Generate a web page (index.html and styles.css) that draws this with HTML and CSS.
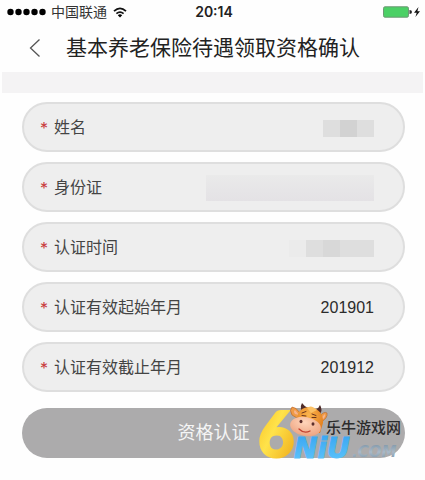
FILE: index.html
```html
<!DOCTYPE html>
<html lang="zh-CN">
<head>
<meta charset="utf-8">
<meta name="viewport" content="width=device-width, initial-scale=1">
<title>基本养老保险待遇领取资格确认</title>
<link rel="stylesheet" href="styles.css">
</head>
<body>
<div class="status">
  <div class="carrier">
    <svg class="signal" width="39" height="8" viewBox="0 0 39 8" aria-hidden="true"><circle cx="3.5" cy="4" r="3.2"/><circle cx="11.5" cy="4" r="3.2"/><circle cx="19.5" cy="4" r="3.2"/><circle cx="27.5" cy="4" r="3.2"/><circle cx="35.5" cy="4" r="3.2"/></svg>
    <span>中国联通</span>
    <svg class="wifi" width="14" height="11" viewBox="0 0 14 11" aria-hidden="true"><path d="M1 4.2Q7-1.6 13 4.2M3.4 6.7Q7 3.4 10.6 6.7" fill="none" stroke="#111" stroke-width="1.7"/><path d="M4.8 8.2Q7 6.4 9.2 8.2L7 10.5z"/></svg>
  </div>
  <time class="clock">20:14</time>
  <div class="power">
    <svg width="38" height="12" viewBox="0 0 38 12" aria-hidden="true"><rect x=".5" y=".8" width="25" height="10.4" rx="1.5" fill="#4bd065" stroke="#6d9874"/><path d="M26.5 4Q29 4 29 6T26.500 8z" fill="#222"/><path d="M35.500 1L31 6.700H33.700L32.400 11L37 5.200H34.400z" fill="#111"/></svg>
  </div>
</div>
<header class="nav">
  <button class="back" type="button" aria-label="返回"><svg width="12" height="20" viewBox="0 0 12 20"><path d="M10.500 1.500L1.500 10L10.500 18.500" fill="none" stroke="#555" stroke-width="1.300"/></svg></button>
  <h1>基本养老保险待遇领取资格确认</h1>
</header>
<div class="band"></div>
<form class="form">
  <div class="field"><span class="star">*</span><span class="label">姓名</span><span class="mask name"><i></i><i></i><i></i></span></div>
  <div class="field"><span class="star">*</span><span class="label">身份证</span><span class="mask idcard"></span></div>
  <div class="field"><span class="star">*</span><span class="label">认证时间</span><span class="mask date"><i></i><i></i><i></i><i></i></span></div>
  <div class="field"><span class="star">*</span><label class="label" for="start">认证有效起始年月</label><input id="start" type="text" value="201901" readonly></div>
  <div class="field"><span class="star">*</span><label class="label" for="end">认证有效截止年月</label><input id="end" type="text" value="201912" readonly></div>
  <div class="action">
    <button class="submit" type="button">资格认证</button>
    <svg class="watermark" width="150" height="84" viewBox="-4 -12 150 84" role="img" aria-label="乐牛游戏网">
      <defs>
        <linearGradient id="gold" x1="0" y1="0" x2="1" y2="1"><stop offset="0" stop-color="#f6b91c"/><stop offset=".45" stop-color="#ffe34a"/><stop offset="1" stop-color="#eda414"/></linearGradient>
        <linearGradient id="blue" x1="0" y1="0" x2="0" y2="1"><stop offset="0" stop-color="#35a3f2"/><stop offset="1" stop-color="#62c7fb"/></linearGradient>
        <linearGradient id="steel" x1="0" y1="0" x2="0" y2="1"><stop offset="0" stop-color="#7c93a6"/><stop offset=".5" stop-color="#a9bac8"/><stop offset="1" stop-color="#7890a4"/></linearGradient>
        <radialGradient id="fur" cx=".45" cy=".3" r=".8"><stop offset="0" stop-color="#fbb54d"/><stop offset="1" stop-color="#dd7416"/></radialGradient>
        <radialGradient id="snout" cx=".45" cy=".3" r=".8"><stop offset="0" stop-color="#ffd5ba"/><stop offset="1" stop-color="#eb9d79"/></radialGradient>
      </defs>
      <text class="six" x="-1" y="53" fill="url(#gold)" stroke="url(#gold)">6</text>
      <text class="niu" x="35" y="54" fill="url(#blue)" stroke="url(#blue)">NiU</text>
      <text class="com" x="93" y="53" fill="url(#steel)">.COM</text>
      <g>
        <path d="M41 9Q37 3 33 3Q30 6 33 11Q37 15 42 13zM61 12Q65 7 68 9Q69 14 62 18z" fill="#ef9b46" stroke="#b96225" stroke-width=".6"/>
        <path d="M36 6Q34 7 36 10L40 11zM66 10L63 13L63 16Q67 13 66 10z" fill="#f7b38d"/>
        <path d="M42 6Q41 2 43-1Q45 2 49 4L47 7zM57 5Q60 4 61 1Q64 6 61 10z" fill="#4e2b28"/>
        <path d="M38 17Q38 3 51 3Q65 6 64 19L61 29H38z" fill="url(#fur)"/>
        <path d="M48 4Q52 0 58 6L52 9z" fill="#fbc064"/>
        <ellipse cx="46.500" cy="22.500" rx="15.500" ry="9.500" transform="rotate(10 46.500 22.500)" fill="url(#snout)"/>
        <path d="M43 9l4-1.500M43 11.500l4 .5M53 10l4 1.500M53 13.500l4 0" stroke="#6b341c" stroke-width="1" stroke-linecap="round"/>
        <ellipse cx="42" cy="17.500" rx="1.500" ry="1.800" fill="#5c2e2b"/><ellipse cx="54" cy="20" rx="1.500" ry="1.800" fill="#5c2e2b"/>
        <path d="M40 25Q45 30 51 27" fill="none" stroke="#c4422f" stroke-width="1.300" stroke-linecap="round"/>
      </g>
      <text class="site" x="67" y="29">乐牛游戏网</text>
    </svg>
  </div>
</form>
</body>
</html>
```
FILE: styles.css
```css
* { box-sizing: border-box; }

body {
  margin: 0;
  background: #fefefe;
  color: #222;
  font-family: "Liberation Sans", "Noto Sans CJK SC", sans-serif;
}

.status {
  display: grid;
  grid-template-columns: 1fr auto 1fr;
  align-items: center;
  height: 24px;
  padding: 0 4px 0 7px;
}

.carrier {
  display: flex;
  align-items: center;
  gap: 5px;
  font-size: 14px;
  line-height: 20px;
  color: #333;
}

.wifi { margin-left: 1px; }

.clock {
  font-family: Inter, sans-serif;
  font-size: 14px;
  font-weight: 600;
  line-height: 20px;
}

.power {
  display: flex;
  justify-content: flex-end;
}

.nav {
  display: grid;
  grid-template-columns: 66px 1fr 68px;
  align-items: center;
  height: 48px;
}

.back {
  display: flex;
  justify-content: flex-end;
  width: 41px;
  padding: 0;
  border: 0;
  background: none;
}

h1 {
  margin: 0;
  font-size: 21px;
  font-weight: 400;
  line-height: 32px;
  text-align: center;
  white-space: nowrap;
}

.band {
  height: 21px;
  margin: 0 2px;
  background: #f4f3f4;
}

.form {
  display: flex;
  flex-direction: column;
  gap: 10px;
  padding: 9px 20px 20px 22px;
}

.field {
  display: flex;
  align-items: center;
  height: 50px;
  padding: 2px 29px 0 16px;
  border: 2px solid #dedede;
  border-radius: 25px;
  background: #eee;
  font-size: 16px;
  line-height: 24px;
}

.star {
  width: 14px;
  color: #c83c3c;
  font-family: Inter, sans-serif;
}

.label {
  flex: none;
  color: #444;
}

input {
  flex: 1;
  min-width: 0;
  padding: 0;
  border: 0;
  background: none;
  color: #2b2b2b;
  font: inherit;
  text-align: right;
  outline: 0;
}

.mask {
  display: flex;
  height: 17px;
  margin-left: auto;
}

.mask i {
  width: 17px;
  background: #dedede;
}

.name i:nth-child(2) { background: #d2d2d2; }

.idcard {
  width: 168px;
  height: 26px;
  background: linear-gradient(#eaeaea, #e6e5e7 60%, #e4e2e5);
}

.date i:first-child { background: #ebebeb; }
.date i:nth-child(3) { background: #d8d8d8; }
.date i:last-child { width: 34px; }

.action {
  position: relative;
  margin-top: 6px;
}

.submit {
  display: block;
  width: 100%;
  height: 50px;
  padding: 0;
  border: 0;
  border-radius: 25px;
  background: #acabac;
  color: #f5f5f5;
  font: inherit;
  font-size: 18px;
  line-height: 26px;
}

.watermark {
  position: absolute;
  right: 0;
  bottom: -18px;
}

.six {
  font-family: Lato, sans-serif;
  font-size: 63px;
  font-weight: 900;
  stroke-width: 2px;
}

.niu {
  font-family: "DejaVu Sans", sans-serif;
  font-size: 28px;
  font-weight: 700;
  font-style: italic;
  stroke-width: 1px;
}

.com {
  font-family: "DejaVu Sans", sans-serif;
  font-size: 15px;
  font-weight: 700;
  font-style: italic;
}

.site {
  fill: #2c2c2c;
  font-size: 15px;
  font-weight: 500;
  font-family: "Noto Sans CJK SC", sans-serif;
}
```
